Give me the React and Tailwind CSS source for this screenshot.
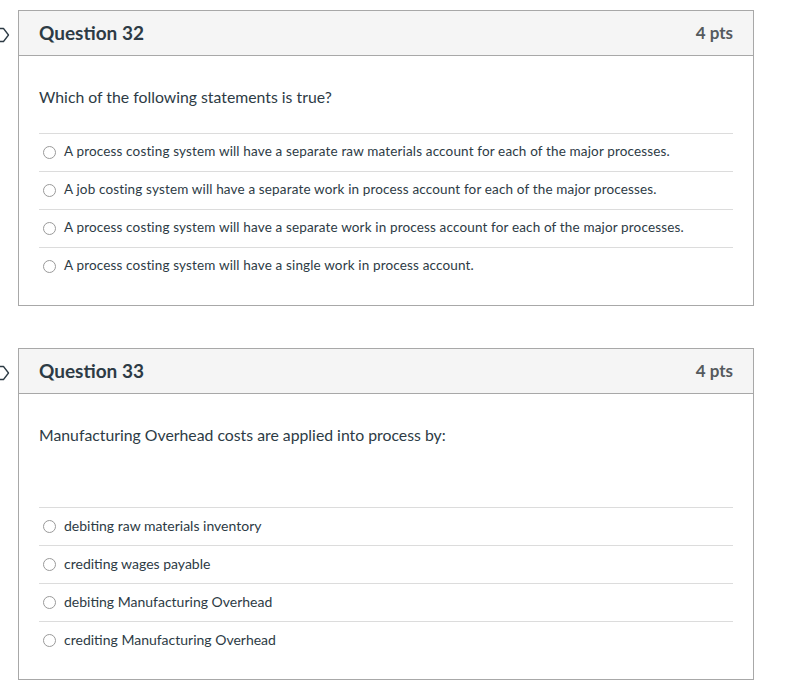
import React from 'react';

const questions = [
  {
    number: 32,
    points: '4 pts',
    text: 'Which of the following statements is true?',
    extraGap: false,
    answerClass: 'text-[13.5px] tracking-[0.15px]',
    answers: [
      'A process costing system will have a separate raw materials account for each of the major processes.',
      'A job costing system will have a separate work in process account for each of the major processes.',
      'A process costing system will have a separate work in process account for each of the major processes.',
      'A process costing system will have a single work in process account.'
    ]
  },
  {
    number: 33,
    points: '4 pts',
    text: 'Manufacturing Overhead costs are applied into process by:',
    extraGap: true,
    answerClass: 'text-[14px]',
    answers: [
      'debiting raw materials inventory',
      'crediting wages payable',
      'debiting Manufacturing Overhead',
      'crediting Manufacturing Overhead'
    ]
  }
];

function FlagTip() {
  return (
    <svg width="10" height="16" viewBox="0 0 10 16" className="mt-[17px]">
      <path d="M0 1.5 H3.5 L8.5 8 L3.5 14.5 H0" fill="none" stroke="#2d3b45" strokeWidth="1.3" strokeLinejoin="round" />
    </svg>
  );
}

function Question({ q }) {
  return (
    <div className="flex">
      <div className="w-[18px] shrink-0">
        <FlagTip />
      </div>
      <div className="w-[736px] border border-[#a8a8a8] bg-white">
        <div className="h-[45px] bg-[#f5f5f5] border-b border-[#a8a8a8] flex items-center justify-between px-5">
          <span className="text-[19px] font-bold text-[#2d3b45]">Question {q.number}</span>
          <span className="text-[17px] font-bold text-[#555a5e]">{q.points}</span>
        </div>
        <div className="px-5 pt-[30px] pb-5">
          <p className="text-[15.8px] leading-[22px] text-[#2d3b45]">{q.text}</p>
          <div className={q.extraGap ? 'mt-[61px]' : 'mt-[25px]'}>
            {q.answers.map((a, i) => (
              <label key={i} className="h-[38px] border-t border-[#dcdcdc] flex items-center pl-1 gap-2 pb-[3px]">
                <span className="w-[13px] h-[13px] mt-[2px] rounded-full border border-[#9a9a9a] bg-white shrink-0"></span>
                <span className={`${q.answerClass} text-[#2d3b45]`}>{a}</span>
              </label>
            ))}
          </div>
        </div>
      </div>
    </div>
  );
}

export default function App() {
  return (
    <div className="min-h-screen bg-white pt-[10px] flex flex-col gap-[42px]" style={{ fontFamily: 'Lato, "Liberation Sans", sans-serif' }}>
      {questions.map((q) => (
        <Question key={q.number} q={q} />
      ))}
    </div>
  );
}
